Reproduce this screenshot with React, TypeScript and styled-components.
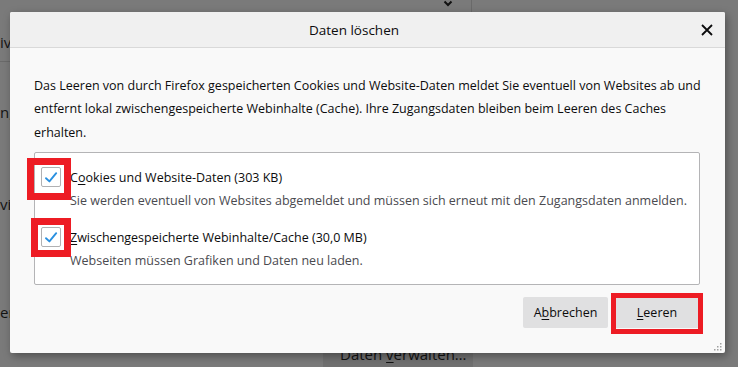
import React from 'react';
import styled, { createGlobalStyle } from 'styled-components';

const Global = createGlobalStyle`
  html, body { margin: 0; padding: 0; }
  body {
    width: 738px;
    height: 367px;
    overflow: hidden;
    background: #7a7a7a;
    font-family: "Open Sans", "Noto Sans", sans-serif;
  }
`;

const Screen = styled.div`
  position: relative;
  width: 738px;
  height: 367px;
  overflow: hidden;
  background: #7a7a7a;
`;

/* ---------- dimmed preferences page behind the dialog ---------- */
const BackPage = styled.div`
  display: flex;
  flex-direction: column;
  height: 100%;
  color: #141414;
  font-size: 15px;
`;

const TopStrip = styled.div`
  display: flex;
  height: 12px;
`;

const MenuStub = styled.div`
  width: 472px;
  display: flex;
  justify-content: flex-end;
  align-items: flex-start;
  padding-right: 18px;
  box-sizing: border-box;
  border-right: 1px solid #6a6a6a;
`;

const SideColumn = styled.div`
  width: 10px;
  display: flex;
  flex-direction: column;
  align-items: flex-start;
  margin-top: 20px;
`;

const SideText = styled.div<{ $gap: number }>`
  white-space: nowrap;
  line-height: 20px;
  margin-top: ${(p) => p.$gap}px;
`;

const SideRule = styled.div`
  align-self: stretch;
  height: 1px;
  background: #6a6a6a;
  margin-top: 9px;
`;

const BottomStrip = styled.div`
  margin-top: auto;
  display: flex;
  padding-left: 323px;
`;

const ManageButton = styled.div`
  width: 150px;
  height: 26px;
  box-sizing: border-box;
  background: #707070;
  padding: 2px 0 0 17px;
  font-size: 15px;
  line-height: 22px;
  color: #121212;
  white-space: nowrap;
`;

/* ---------- dialog ---------- */
const Dialog = styled.div`
  position: absolute;
  left: 10px;
  top: 12px;
  width: 715px;
  height: 341px;
  display: flex;
  flex-direction: column;
  background: #f9f9f9;
  border-radius: 2px;
  box-shadow: 2px 3px 8px rgba(0, 0, 0, 0.35);
  color: #0c0c0d;
  font-size: 12.5px;
`;

const Header = styled.div`
  height: 35px;
  display: flex;
  align-items: center;
  background: #f0f0f0;
  border-bottom: 1px solid #d9d9d9;
  border-radius: 2px 2px 0 0;
`;

const Title = styled.div`
  flex: 1;
  text-align: center;
  font-size: 13.5px;
  padding-top: 1px;
`;

const CloseButton = styled.div`
  width: 27px;
  display: flex;
  justify-content: flex-start;
  align-items: center;
  padding-left: 3px;
  box-sizing: border-box;
`;

const Body = styled.div`
  flex: 1;
  display: flex;
  flex-direction: column;
  padding: 26px 25px 0 24px;
`;

const Intro = styled.p`
  margin: 0;
  line-height: 23.3px;
  white-space: nowrap;
`;

const ListBox = styled.div`
  margin-top: 8px;
  height: 133px;
  box-sizing: border-box;
  background: #ffffff;
  border: 1px solid #b4b4b6;
  border-radius: 2px;
  padding: 13px 0 0 6px;
  display: flex;
  flex-direction: column;
  gap: 14px;
`;

const Item = styled.div`
  display: grid;
  grid-template-columns: 20px 1fr;
  column-gap: 9px;
  line-height: 23px;
`;

const CheckWrap = styled.div<{ $t: number; $r: number; $b: number; $l: number }>`
  position: relative;
  width: 20px;
  height: 20px;
  margin-top: 1px;
  &::after {
    content: '';
    position: absolute;
    top: ${(p) => p.$t}px;
    right: ${(p) => p.$r}px;
    bottom: ${(p) => p.$b}px;
    left: ${(p) => p.$l}px;
    border: 7px solid #ed1c24;
    pointer-events: none;
  }
`;

const CheckBox = styled.div`
  width: 20px;
  height: 20px;
  box-sizing: border-box;
  border: 1px solid #b1b1b3;
  border-radius: 2px;
  background: #fff;
  display: flex;
`;

const Label = styled.div`
  white-space: nowrap;
`;

const Desc = styled.div`
  grid-column: 2;
  color: #4a4a4f;
  white-space: nowrap;
`;

const AccessKey = styled.span`
  text-decoration: underline;
  text-underline-offset: 2px;
`;

const ButtonRow = styled.div`
  margin-top: 12px;
  display: flex;
  justify-content: flex-end;
  gap: 6px;
`;

const ButtonWrap = styled.div<{ $marked?: boolean }>`
  position: relative;
  ${(p) =>
    p.$marked
      ? `&::after {
    content: '';
    position: absolute;
    top: -4px;
    right: -3px;
    bottom: -6px;
    left: -3px;
    border: 5px solid #ed1c24;
    pointer-events: none;
  }`
      : ''}
`;

const Button = styled.button<{ $w: number }>`
  width: ${(p) => p.$w}px;
  height: 31px;
  border: none;
  border-radius: 2px;
  background: #e0e0e1;
  color: #0c0c0d;
  font-family: inherit;
  font-size: 12.5px;
  padding: 0;
`;

const Grip = styled.svg`
  position: absolute;
  right: 3px;
  bottom: 2px;
`;

function Check() {
  return (
    <svg width="18" height="18" viewBox="0 0 18 18">
      <path d="M4 10.2 L7.4 13.4 L14.2 5.2" fill="none" stroke="#2a90e0" strokeWidth="1.9" strokeLinecap="round" strokeLinejoin="round" />
    </svg>
  );
}

export default function App() {
  return (
    <Screen>
      <Global />
      <BackPage>
        <TopStrip>
          <MenuStub>
            <svg width="10" height="8" viewBox="0 0 10 8">
              <path d="M1.5 1.5 L5 5 L8.5 1.5" fill="none" stroke="#111" strokeWidth="2" />
            </svg>
          </MenuStub>
        </TopStrip>
        <SideColumn>
          <SideText $gap={0}>iv</SideText>
          <SideRule />
          <SideText $gap={40}>n,</SideText>
          <SideText $gap={72}>vi</SideText>
          <SideText $gap={88}>er</SideText>
        </SideColumn>
        <BottomStrip>
          <ManageButton>
            Daten <AccessKey>v</AccessKey>erwalten…
          </ManageButton>
        </BottomStrip>
      </BackPage>

      <Dialog>
        <Header>
          <Title>Daten löschen</Title>
          <CloseButton>
            <svg width="12" height="12" viewBox="0 0 12 12">
              <path d="M1 1 L11 11 M11 1 L1 11" stroke="#0c0c0d" strokeWidth="1.8" />
            </svg>
          </CloseButton>
        </Header>
        <Body>
          <Intro>
            Das Leeren von durch Firefox gespeicherten Cookies und Website-Daten meldet Sie eventuell von Websites ab und
            <br />
            entfernt lokal zwischengespeicherte Webinhalte (Cache). Ihre Zugangsdaten bleiben beim Leeren des Caches
            <br />
            erhalten.
          </Intro>
          <ListBox>
            <Item>
              <CheckWrap $t={-9} $r={-10} $b={-13} $l={-14}>
                <CheckBox>
                  <Check />
                </CheckBox>
              </CheckWrap>
              <Label>
                C<AccessKey>o</AccessKey>okies und Website-Daten (303 KB)
              </Label>
              <Desc>Sie werden eventuell von Websites abgemeldet und müssen sich erneut mit den Zugangsdaten anmelden.</Desc>
            </Item>
            <Item>
              <CheckWrap $t={-9} $r={-10} $b={-10} $l={-10}>
                <CheckBox>
                  <Check />
                </CheckBox>
              </CheckWrap>
              <Label>
                <AccessKey>Z</AccessKey>wischengespeicherte Webinhalte/Cache (30,0 MB)
              </Label>
              <Desc>Webseiten müssen Grafiken und Daten neu laden.</Desc>
            </Item>
          </ListBox>
          <ButtonRow>
            <ButtonWrap>
              <Button $w={85}>
                A<AccessKey>b</AccessKey>brechen
              </Button>
            </ButtonWrap>
            <ButtonWrap $marked>
              <Button $w={86}>
                <AccessKey>L</AccessKey>eeren
              </Button>
            </ButtonWrap>
          </ButtonRow>
        </Body>
        <Grip width="10" height="10" viewBox="0 0 10 10">
          <g fill="#a0a0a0">
            <rect x="8" y="8" width="1.5" height="1.5" />
            <rect x="5" y="8" width="1.5" height="1.5" />
            <rect x="2" y="8" width="1.5" height="1.5" />
            <rect x="8" y="5" width="1.5" height="1.5" />
            <rect x="5" y="5" width="1.5" height="1.5" />
            <rect x="8" y="2" width="1.5" height="1.5" />
          </g>
        </Grip>
      </Dialog>
    </Screen>
  );
}
